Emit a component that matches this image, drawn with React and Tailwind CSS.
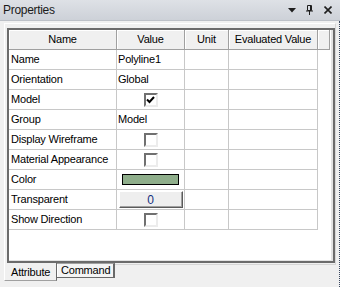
import React from 'react';

const rows = [
  { name: 'Name', value: 'Polyline1' },
  { name: 'Orientation', value: 'Global' },
  { name: 'Model', check: true },
  { name: 'Group', value: 'Model' },
  { name: 'Display Wireframe', check: false },
  { name: 'Material Appearance', check: false },
  { name: 'Color', swatch: '#8fae8b' },
  { name: 'Transparent', button: '0' },
  { name: 'Show Direction', check: false },
];

const headers = ['Name', 'Value', 'Unit', 'Evaluated Value', ''];

const CheckBox = ({ checked }) => (
  <div className="w-[14px] h-[14px] bg-white border-2 border-t-[#707070] border-l-[#707070] border-r-[#ececec] border-b-[#ececec] flex items-center justify-center">
    {checked && (
      <svg width="9" height="8" viewBox="0 0 9 8">
        <path d="M1 3.5 L3.5 6 L8 1" stroke="#000" strokeWidth="2" fill="none" />
      </svg>
    )}
  </div>
);

const ValueCell = ({ row }) => {
  if (row.check !== undefined) {
    return (
      <div className="h-full flex items-center justify-center">
        <CheckBox checked={row.check} />
      </div>
    );
  }
  if (row.swatch) {
    return (
      <div className="h-full flex items-center justify-center">
        <div className="w-[57px] h-[11px] border border-black" style={{ backgroundColor: row.swatch }} />
      </div>
    );
  }
  if (row.button) {
    return (
      <div className="h-full flex items-center justify-center">
        <div className="w-[64px] h-[17px] bg-[#eeeeee] border border-t-white border-l-white border-r-[#5a5a5a] border-b-[#5a5a5a] shadow-[inset_-1px_-1px_0_#a0a0a0] flex items-center justify-center text-[12px] text-[#14307e]">
          {row.button}
        </div>
      </div>
    );
  }
  return <div className="h-full flex items-center pl-[1px]">{row.value}</div>;
};

export default function App() {
  return (
    <div
      className="w-[340px] h-[287px] bg-[#f0f0f0] flex flex-col overflow-hidden text-black text-[11px] tracking-[-0.2px]"
      style={{ fontFamily: '"Liberation Sans", Arial, sans-serif' }}
    >
      {/* title bar */}
      <div className="h-[21px] shrink-0 bg-gradient-to-b from-[#dee1e6] to-[#cdd1d8] border-b border-[#bcc0c7] flex items-center pl-[3px] pr-[8px]">
        <span className="text-[12px] tracking-[-0.3px] text-[#1a1a1a]">Properties</span>
        <div className="ml-auto flex items-center">
          <svg width="8" height="5" viewBox="0 0 8 5" className="mr-[10px]">
            <path d="M0 0 H8 L4 4.5 Z" fill="#1e1e1e" />
          </svg>
          <svg width="8" height="10" viewBox="0 0 8 10" className="mr-[10px]">
            <path d="M1.5 0.5 H5.5 V5.5 H1.5 Z M4.5 0.5 V5.5" stroke="#1e1e1e" fill="none" />
            <path d="M0 6 H7 M3.5 6 V10" stroke="#1e1e1e" />
          </svg>
          <svg width="8" height="8" viewBox="0 0 8 8">
            <path d="M0.5 0.5 L7.5 7.5 M7.5 0.5 L0.5 7.5" stroke="#1e1e1e" strokeWidth="1.6" />
          </svg>
        </div>
      </div>

      {/* body */}
      <div className="flex-1 flex flex-col border-r border-dotted border-[#3a4860]">
        <div className="ml-[4px] mt-[2px] w-[332px] h-[242px] border border-t-white border-l-white border-r-[#d6d6d6] border-b-[#d6d6d6] pl-[2px] pt-[4px] pb-[1px]">
          <div className="h-full border-2 border-[#6b6b6b]">
            <div className="h-full bg-white border-r-2 border-b border-[#e3e3e3]">
              <div className="grid grid-cols-[108px_68px_44px_89px_12px]">
                {headers.map((h, i) => (
                  <div
                    key={i}
                    className="h-[20px] bg-[#f0f0f0] border-r border-b border-[#a0a0a0] shadow-[inset_1px_1px_0_#ffffff] flex items-center justify-center"
                  >
                    {h}
                  </div>
                ))}
                {rows.map((row) => (
                  <React.Fragment key={row.name}>
                    <div className="h-[20px] border-r border-b border-[#c8c8c8] flex items-center pl-[2px] whitespace-nowrap">
                      {row.name}
                    </div>
                    <div className="h-[20px] border-r border-b border-[#c8c8c8]">
                      <ValueCell row={row} />
                    </div>
                    <div className="h-[20px] border-r border-b border-[#c8c8c8]" />
                    <div className="h-[20px] border-r border-b border-[#c8c8c8]" />
                    <div className="h-[20px]" />
                  </React.Fragment>
                ))}
              </div>
            </div>
          </div>
        </div>

        {/* tabs */}
        <div className="flex items-start pl-[4px] -mt-[2px]">
          <div className="w-[53px] h-[18px] bg-[#f0f0f0] border-l border-l-white border-r border-r-[#696969] border-b border-b-[#a0a0a0] flex items-center pl-[6px] pt-[2px]">
            Attribute
          </div>
          <div className="w-[58px] h-[15px] bg-[#f4f4f4] border-t border-t-[#a0a0a0] border-r-2 border-r-[#696969] border-b border-b-[#696969] shadow-[inset_1px_0_0_#ffffff] flex items-center pl-[4px]">
            Command
          </div>
        </div>
      </div>
    </div>
  );
}
